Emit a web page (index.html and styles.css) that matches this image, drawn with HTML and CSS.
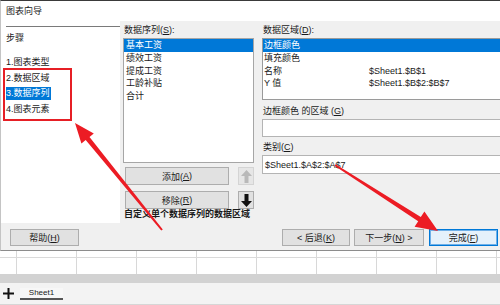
FILE: index.html
```html
<!DOCTYPE html>
<html lang="zh-CN">
<head>
<meta charset="utf-8">
<title>图表向导</title>
<link rel="stylesheet" href="styles.css">
</head>
<body>
<div class="screen">
  <div class="dialog">
    <div class="titlebar">图表向导</div>
    <div class="body">
      <aside class="steps">
        <div class="steps-head">步骤</div>
        <ol class="step-list">
          <li><span>1.图表类型</span></li>
          <li><span>2.数据区域</span></li>
          <li class="active"><span>3.数据序列</span></li>
          <li><span>4.图表元素</span></li>
        </ol>
      </aside>
      <section class="series">
        <div class="lbl">数据序列(<u>S</u>):</div>
        <div class="listbox list-series">
          <div class="item sel">基本工资</div>
          <div class="item">绩效工资</div>
          <div class="item">提成工资</div>
          <div class="item">工龄补贴</div>
          <div class="item">合计</div>
        </div>
        <div class="btn-row">
          <div class="btn wide">添加(<u>A</u>)</div>
          <div class="btn arrow disabled">
            <svg width="11" height="13" viewBox="0 0 11 13"><path d="M5.5 0 L11 6 H7.5 V13 H3.5 V6 H0 Z" fill="#b9b9b9"/></svg>
          </div>
        </div>
        <div class="btn-row gap">
          <div class="btn wide">移除(<u>R</u>)</div>
          <div class="btn arrow">
            <svg width="11" height="13" viewBox="0 0 11 13"><path d="M5.5 13 L11 7 H7.5 V0 H3.5 V7 H0 Z" fill="#111"/></svg>
          </div>
        </div>
        <div class="note">自定义单个数据序列的数据区域</div>
      </section>
      <section class="ranges">
        <div class="lbl">数据区域(<u>D</u>):</div>
        <div class="listbox list-ranges">
          <div class="item sel"><span class="key">边框颜色</span></div>
          <div class="item"><span class="key">填充颜色</span></div>
          <div class="item"><span class="key">名称</span><span class="val">$Sheet1.$B$1</span></div>
          <div class="item"><span class="key">Y 值</span><span class="val">$Sheet1.$B$2:$B$7</span></div>
        </div>
        <div class="lbl lbl-g">边框颜色 的区域 (<u>G</u>)</div>
        <div class="input"></div>
        <div class="lbl lbl-c">类别(<u>C</u>)</div>
        <div class="input input-c">$Sheet1.$A$2:$A$7</div>
      </section>
    </div>
    <div class="footer">
      <div class="btn help">帮助(<u>H</u>)</div>
      <div class="nav">
        <div class="btn back">&lt; 后退(<u>K</u>)</div>
        <div class="btn next">下一步(<u>N</u>) &gt;</div>
        <div class="btn finish">完成(<u>F</u>)</div>
      </div>
    </div>
  </div>
  <div class="sheet">
    <div class="row row-a">
      <div class="cell first"></div><div class="cell"></div><div class="cell"></div><div class="cell"></div><div class="cell"></div><div class="cell"></div><div class="cell"></div><div class="cell"></div><div class="cell"></div><div class="cell"></div>
    </div>
    <div class="row row-b">
      <div class="cell first"></div><div class="cell"></div><div class="cell"></div><div class="cell"></div><div class="cell"></div><div class="cell"></div><div class="cell"></div><div class="cell"></div><div class="cell"></div><div class="cell"></div>
    </div>
  </div>
  <div class="scrollbar"></div>
  <div class="tabs">
    <svg class="plus" width="11" height="11" viewBox="0 0 11 11"><rect x="4.5" y="0" width="2" height="11" fill="#111"/><rect x="0" y="4.5" width="11" height="2" fill="#111"/></svg>
    <div class="tab">Sheet1</div>
  </div>

  <div class="mark-box"></div>
  <svg class="annot" width="500" height="305" viewBox="0 0 500 305">
    <polygon fill="#ec1c24" points="75,123 93.8,133.5 89.5,136.9 162.8,229.4 161.2,230.6 85.7,140.1 81.4,143.5"/>
    <polygon fill="#ec1c24" points="438,231 424.4,211.5 420.8,217 335.5,164.2 334.5,165.8 418.2,221.2 414.6,226.7"/>
  </svg>
</div>
</body>
</html>
```

FILE: styles.css
```css
* { box-sizing: border-box; margin: 0; padding: 0; }
html, body { width: 500px; height: 305px; overflow: hidden; background: #fff; }
body {
  font-family: "Liberation Sans", "Noto Sans CJK SC", sans-serif;
  font-size: 9px;
  color: #1a1a1a;
}
u { text-decoration: underline; text-underline-offset: 1px; }

.screen { position: relative; width: 500px; height: 305px; overflow: hidden; }

.dialog {
  width: 503px;
  height: 251px;
  border-top: 1px solid #3a3a3a;
  border-left: 1px solid #c4c4c4;
  border-bottom: 1px solid #8c8c8c;
  background: #f0f0f0;
  display: flex;
  flex-direction: column;
}
.titlebar {
  height: 20px;
  background: #fff;
  line-height: 21px;
  padding-left: 5px;
}
.body {
  height: 202px;
  display: grid;
  grid-template-columns: 119px 134px 250px;
}
.steps {
  background: #fff;
  padding-top: 5px;
  padding-left: 5px;
}
.steps-head {
  border-top: 1px solid #7a7a7a;
  padding-top: 5px;
  line-height: 12px;
}
.step-list { list-style: none; margin-top: 11px; }
.step-list li {
  height: 15.5px;
  display: flex;
  align-items: center;
}
.step-list li span { line-height: 13px; padding-right: 1px; }
.step-list li.active span { background: #0078d7; color: #fff; }

.series { padding: 3px 0 0 3px; }
.lbl { line-height: 12px; margin-bottom: 2px; padding-left: 1px; white-space: nowrap; }

.listbox {
  background: #fff;
  border: 1px solid #a6a6a6;
  overflow: hidden;
}
.list-series { height: 125px; width: 131px; }
.item {
  height: 12.5px;
  line-height: 12.5px;
  padding-left: 2px;
  white-space: nowrap;
  display: flex;
}
.item.sel { height: 13px; line-height: 13px; background: #0078d7; color: #fff; }

.btn-row { display: flex; margin-top: 4px; padding-left: 2px; }
.btn-row.gap { margin-top: 6px; }
.btn {
  height: 18px;
  background: #e1e1e1;
  border: 1px solid #adadad;
  display: flex;
  align-items: center;
  justify-content: center;
  white-space: nowrap;
}
.btn.wide { width: 104px; }
.btn.arrow { width: 16px; margin-left: 9px; }
.btn.arrow.disabled { background: #e6e6e6; border-color: #d4d4d4; }
.note { font-weight: bold; line-height: 10px; white-space: nowrap; padding-left: 1px; }

.ranges { padding: 3px 0 0 8px; }
.list-ranges { height: 62px; width: 260px; border-color: #9a9a9a; }
.list-ranges .item { padding-left: 1px; }
.key { width: 105px; }
.lbl-g { margin-top: 5px; }
.input {
  width: 260px;
  height: 18px;
  background: #fff;
  border: 1px solid #b4b4b4;
  line-height: 16px;
  padding-left: 2px;
}
.lbl-c { margin-top: 4px; }
.input-c { height: 19px; line-height: 18px; }

.footer {
  height: 27px;
  display: flex;
  align-items: flex-start;
  padding: 6px 0 0 9px;
}
.footer .btn { height: 17px; }
.help { width: 69px; }
.nav { display: flex; margin-left: auto; margin-right: 5px; }
.back { width: 68px; }
.next { width: 70px; margin-left: 4px; }
.finish {
  width: 69px;
  margin-left: 5px;
  border-color: #0078d7;
  box-shadow: inset 0 0 0 1px #6fb0e8;
  background: #e5f1fb;
}

.sheet { height: 23px; background: #fff; }
.row { display: grid; grid-template-columns: 16px repeat(9, 60px); }
.row-a { height: 6px; }
.row-b { height: 17px; border-top: 1px solid #dadada; }
.cell { border-left: 1px solid #d8d8d8; }
.cell.first { border-left: 0; }
.scrollbar { height: 9px; background: #d2d2d2; }
.tabs {
  height: 22px;
  background: #f3f3f3;
  border-bottom: 1px solid #d6d6d6;
  display: flex;
  align-items: flex-start;
  padding: 5px 0 0 3px;
}
.plus { display: block; }
.tab {
  margin-left: 6px;
  width: 43px;
  height: 12px;
  font-size: 8px;
  line-height: 10px;
  text-align: center;
  border-bottom: 2px solid #555;
  background: #f7f7f7;
}

.mark-box {
  position: absolute;
  left: 3px;
  top: 68px;
  width: 69px;
  height: 53px;
  border: 2.5px solid #e61f25;
}
.annot { position: absolute; left: 0; top: 0; pointer-events: none; }
```
